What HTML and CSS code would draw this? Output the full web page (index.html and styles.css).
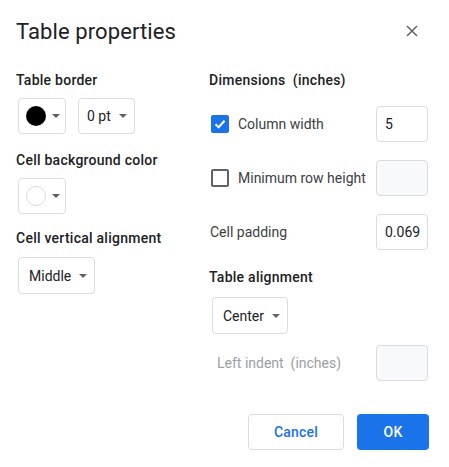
FILE: index.html
```html
<!DOCTYPE html>
<html>
<head>
<meta charset="utf-8">
<link rel="stylesheet" href="styles.css">
</head>
<body>
<div class="dialog">
  <div class="header">
    <div class="title">Table properties</div>
    <svg class="close" width="12" height="12" viewBox="0 0 12 12"><path d="M1 1L11 11M11 1L1 11" stroke="#5f6368" stroke-width="1.5" fill="none"/></svg>
  </div>
  <div class="columns">
    <div class="col-left">
      <div class="label">Table border</div>
      <div class="btn-row">
        <div class="select swatch"><span class="dot dot-black"></span><span class="caret"></span></div>
        <div class="select text-select pt"><span>0 pt</span><span class="caret"></span></div>
      </div>
      <div class="label gap">Cell background color</div>
      <div class="btn-row">
        <div class="select swatch"><span class="dot dot-white"></span><span class="caret"></span></div>
      </div>
      <div class="label gap gap-tight">Cell vertical alignment</div>
      <div class="btn-row btn-row-last">
        <div class="select text-select tall"><span>Middle</span><span class="caret"></span></div>
      </div>
    </div>
    <div class="col-right">
      <div class="label">Dimensions&nbsp; (inches)</div>
      <div class="row first">
        <div class="check-label"><span class="checkbox checked"><svg width="14" height="14" viewBox="0 0 14 14"><path d="M2.5 7.2L5.6 10.2L11.6 3.8" stroke="#fff" stroke-width="2" fill="none"/></svg></span><span>Column width</span></div>
        <div class="input">5</div>
      </div>
      <div class="row">
        <div class="check-label"><span class="checkbox"></span><span>Minimum row height</span></div>
        <div class="input disabled"></div>
      </div>
      <div class="row">
        <div class="plain-label">Cell padding</div>
        <div class="input">0.069</div>
      </div>
      <div class="label align-label">Table alignment</div>
      <div class="select text-select center-btn"><span>Center</span><span class="caret"></span></div>
      <div class="row indent-row">
        <div class="plain-label muted">Left indent&nbsp; (inches)</div>
        <div class="input disabled"></div>
      </div>
    </div>
  </div>
  <div class="footer">
    <div class="button cancel">Cancel</div>
    <div class="button ok">OK</div>
  </div>
</div>
</body>
</html>
```
FILE: styles.css
```css
html, body {
  margin: 0;
  padding: 0;
  background: #fff;
}
.dialog {
  width: 449px;
  height: 467px;
  box-sizing: border-box;
  padding: 0 20px 0 16px;
  font-family: Roboto, "Liberation Sans", sans-serif;
  color: #202124;
}
.header {
  height: 64px;
  display: flex;
  align-items: center;
  justify-content: space-between;
}
.title {
  font-size: 22px;
  line-height: 28px;
  color: #202124;
  letter-spacing: 0.1px;
}
.close {
  margin-right: 11px;
  margin-top: -2px;
}
.columns {
  display: grid;
  grid-template-columns: 193px 1fr;
  padding-top: 6px;
}
.label {
  font-size: 14px;
  font-weight: 500;
  line-height: 20px;
  color: #202124;
  letter-spacing: 0.25px;
}
.label.gap {
  margin-top: 16px;
}
.label.gap-tight {
  margin-top: 14px;
}
.btn-row {
  display: flex;
  gap: 12px;
  margin-top: 8px;
  margin-left: 2px;
}
.btn-row-last {
  margin-top: 9px;
}
.select {
  height: 36px;
  box-sizing: border-box;
  border: 1px solid #dadce0;
  border-radius: 4px;
  display: flex;
  align-items: center;
  font-size: 14px;
  color: #202124;
}
.select.tall {
  height: 37px;
}
.swatch {
  width: 48px;
  padding-left: 7px;
  gap: 6px;
}
.dot {
  width: 20px;
  height: 20px;
  border-radius: 50%;
  box-sizing: border-box;
}
.dot-black {
  background: #000;
}
.dot-white {
  background: #fff;
  border: 1px solid #dadce0;
}
.caret {
  width: 0;
  height: 0;
  border-left: 4px solid transparent;
  border-right: 4px solid transparent;
  border-top: 4px solid #5f6368;
}
.text-select {
  padding: 0 7px 0 10px;
  gap: 8px;
}
.pt {
  padding-left: 8px;
  width: 57px;
}
.col-right {
  display: flex;
  flex-direction: column;
  align-items: stretch;
}
.row {
  height: 36px;
  display: flex;
  align-items: center;
  justify-content: space-between;
  margin-top: 18px;
  margin-right: 1px;
}
.row.first {
  margin-top: 16px;
}
.check-label {
  display: flex;
  align-items: center;
  gap: 9px;
  margin-left: 2px;
  font-size: 14px;
  color: #3c4043;
}
.checkbox {
  width: 18px;
  height: 18px;
  box-sizing: border-box;
  border: 2px solid #5f6368;
  border-radius: 2px;
  display: flex;
  align-items: center;
  justify-content: center;
}
.checkbox.checked {
  background: #1a73e8;
  border-color: #1a73e8;
}
.plain-label {
  font-size: 14px;
  color: #3c4043;
  margin-left: 1px;
}
.plain-label.muted {
  color: #9aa0a6;
  margin-left: 8px;
}
.input {
  width: 52px;
  height: 36px;
  box-sizing: border-box;
  border: 1px solid #dadce0;
  border-radius: 4px;
  padding-left: 8px;
  display: flex;
  align-items: center;
  font-size: 14px;
  color: #202124;
}
.input.disabled {
  background: #f8f9fa;
}
.align-label {
  margin-top: 17px;
}
.center-btn {
  align-self: flex-start;
  margin-top: 10px;
  margin-left: 3px;
  height: 37px;
}
.indent-row {
  margin-top: 11px;
}
.footer {
  display: flex;
  justify-content: flex-end;
  gap: 13px;
  margin-top: 33px;
}
.button {
  height: 36px;
  box-sizing: border-box;
  border-radius: 4px;
  display: flex;
  align-items: center;
  justify-content: center;
  font-size: 14px;
  font-weight: 500;
  letter-spacing: 0.2px;
}
.cancel {
  width: 96px;
  border: 1px solid #dadce0;
  color: #1a73e8;
}
.ok {
  width: 72px;
  background: #1a73e8;
  color: #fff;
}
```
